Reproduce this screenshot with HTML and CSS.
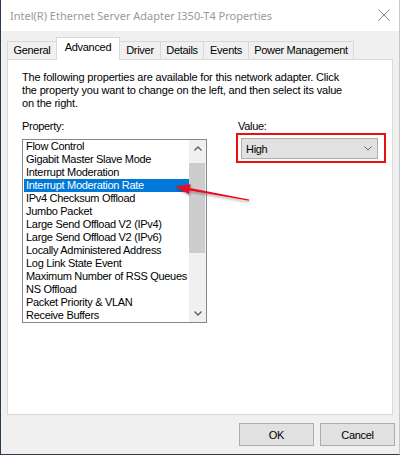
FILE: index.html
```html
<!DOCTYPE html>
<html lang="en">

<head>
    <meta charset="UTF-8">
    <title>Intel(R) Ethernet Server Adapter I350-T4 Properties</title>
    <link rel="stylesheet" href="styles.css">
</head>

<body>
    <div class="window">
        <div class="titlebar">
            <span class="title">Intel(R) Ethernet Server Adapter I350-T4 Properties</span>
            <svg class="close" width="12" height="12" viewBox="0 0 12 12">
                <path d="M0.5 0.5 L11.5 11.5 M11.5 0.5 L0.5 11.5" stroke="#8a8a8a" stroke-width="1" fill="none" />
            </svg>
        </div>

        <div class="client">
            <div class="tabs">
                <div class="tab tab-general">General</div>
                <div class="tab tab-advanced active">Advanced</div>
                <div class="tab tab-driver">Driver</div>
                <div class="tab tab-details">Details</div>
                <div class="tab tab-events">Events</div>
                <div class="tab tab-power">Power Management</div>
            </div>

            <div class="panel">
                <p class="intro">The following properties are available for this network adapter. Click<br>
                    the property you want to change on the left, and then select its value<br>
                    on the right.</p>

                <div class="fields">
                    <div class="field field-property">
                        <div class="label">Property:</div>
                        <div class="listbox">
                            <ul class="items">
                                <li>Flow Control</li>
                                <li>Gigabit Master Slave Mode</li>
                                <li>Interrupt Moderation</li>
                                <li class="selected">Interrupt Moderation Rate</li>
                                <li>IPv4 Checksum Offload</li>
                                <li>Jumbo Packet</li>
                                <li>Large Send Offload V2 (IPv4)</li>
                                <li>Large Send Offload V2 (IPv6)</li>
                                <li>Locally Administered Address</li>
                                <li>Log Link State Event</li>
                                <li>Maximum Number of RSS Queues</li>
                                <li>NS Offload</li>
                                <li>Packet Priority &amp; VLAN</li>
                                <li>Receive Buffers</li>
                            </ul>
                            <div class="scrollbar">
                                <div class="sb-button">
                                    <svg width="8" height="5" viewBox="0 0 8 5">
                                        <path d="M0.5 4.5 L4 1 L7.5 4.5" stroke="#606060" stroke-width="1.4" fill="none" />
                                    </svg>
                                </div>
                                <div class="sb-track">
                                    <div class="sb-thumb"></div>
                                </div>
                                <div class="sb-button">
                                    <svg width="8" height="5" viewBox="0 0 8 5">
                                        <path d="M0.5 0.5 L4 4 L7.5 0.5" stroke="#606060" stroke-width="1.4" fill="none" />
                                    </svg>
                                </div>
                            </div>
                        </div>
                    </div>

                    <div class="field field-value">
                        <div class="label">Value:</div>
                        <div class="callout">
                            <div class="combo">
                                <span>High</span>
                                <svg width="8" height="5" viewBox="0 0 8 5">
                                    <path d="M0.5 0.5 L4 4 L7.5 0.5" stroke="#606060" stroke-width="1" fill="none" />
                                </svg>
                            </div>
                        </div>
                    </div>
                </div>
            </div>

            <div class="buttons">
                <button class="btn">OK</button>
                <button class="btn">Cancel</button>
            </div>
        </div>

        <!-- red pointer drawn over the list -->
        <svg class="pointer" width="400" height="455" viewBox="0 0 400 455">
            <defs>
                <filter id="soft" x="-20%" y="-50%" width="140%" height="200%">
                    <feDropShadow dx="1" dy="2" stdDeviation="1" flood-color="#000" flood-opacity="0.3" />
                </filter>
            </defs>
            <polygon filter="url(#soft)" fill="#e81123"
                points="175,186.5 190.6,184.2 190,187.9 249.1,199.5 248.9,200.7 189.6,190.6 189,194.2" />
        </svg>
    </div>
</body>

</html>
```

FILE: styles.css
```css
* {
    box-sizing: border-box;
    margin: 0;
    padding: 0;
}

body {
    font-family: 'Liberation Sans', Arial, sans-serif;
    font-size: 11px;
    letter-spacing: -0.3px;
    color: #000;
    background-color: #fff;
}

.window {
    position: relative;
    width: 400px;
    height: 455px;
    border-left: 1px solid #2b3b4e;
    border-bottom: 1px solid #2b3b4e;
    border-right: 1px solid #c8c8c8;
    background-color: #f0f0f0;
    display: flex;
    flex-direction: column;
}

.titlebar {
    height: 31px;
    background-color: #fff;
    display: flex;
    align-items: center;
    justify-content: space-between;
    padding: 0 9px 0 9px;
}

.title {
    font-family: 'Noto Sans', sans-serif;
    font-size: 11px;
    letter-spacing: 0;
    color: #999;
    padding-bottom: 1px;
}

.close {
    display: block;
    margin-top: -1px;
}

.client {
    flex: 1;
    padding: 6px 6px 0 6px;
}

/* tab strip */
.tabs {
    display: flex;
    align-items: flex-end;
    height: 22px;
}

.tab {
    height: 18px;
    line-height: 17px;
    text-align: center;
    background-color: #f0f0f0;
    border: 1px solid #d9d9d9;
    border-bottom: none;
    margin-left: -1px;
}

.tab-general {
    margin-left: 0;
    width: 50px;
}

.tab-advanced {
    width: 64px;
}

.tab-driver {
    width: 42px;
}

.tab-details {
    width: 44px;
}

.tab-events {
    width: 46px;
}

.tab-power {
    width: 106px;
}

.tab.active {
    position: relative;
    z-index: 1;
    height: 23px;
    line-height: 19px;
    margin-bottom: -1px;
    background-color: #fff;
}

.panel {
    height: 356px;
    background-color: #fff;
    border: 1px solid #d9d9d9;
    padding: 11px 14px;
}

.intro {
    line-height: 13px;
    letter-spacing: -0.18px;
    white-space: nowrap;
}

.fields {
    display: flex;
    margin-top: 10px;
}

.label {
    line-height: 13px;
}

.field-property .label {
    margin-bottom: 6px;
}

/* list box */
.listbox {
    display: flex;
    width: 185px;
    height: 184px;
    border: 1px solid #828790;
}

.items {
    list-style: none;
    width: 166px;
}

.items li {
    height: 13px;
    line-height: 13px;
    padding-left: 3px;
    white-space: nowrap;
}

.items li.selected {
    margin-left: 1px;
    padding-left: 2px;
    background-color: #0078d7;
    color: #fff;
}

.scrollbar {
    width: 17px;
    display: flex;
    flex-direction: column;
    background-color: #f0f0f0;
}

.sb-button {
    height: 17px;
    display: flex;
    align-items: center;
    justify-content: center;
}

.sb-track {
    flex: 1;
    padding-top: 6px;
}

.sb-thumb {
    width: 16px;
    height: 90px;
    background-color: #cdcdcd;
}

/* value side */
.field-value {
    margin-left: 29px;
}

.field-value .label {
    padding-left: 2px;
}

.callout {
    width: 150px;
    border: 2px solid #e81010;
    padding: 3px 6px 2px 3px;
}

.combo {
    height: 21px;
    background-color: #e1e1e1;
    border: 1px solid #adadad;
    display: flex;
    align-items: center;
    justify-content: space-between;
    padding: 0 5px 0 4px;
}

.combo svg {
    display: block;
}

/* dialog buttons */
.buttons {
    display: flex;
    justify-content: flex-end;
    gap: 6px;
    padding-top: 8px;
    margin-right: -2px;
}

.btn {
    width: 75px;
    height: 23px;
    font-family: inherit;
    font-size: 11px;
    letter-spacing: -0.3px;
    color: #000;
    background-color: #e1e1e1;
    border: 1px solid #adadad;
}

.pointer {
    position: absolute;
    left: -1px;
    top: 0;
    pointer-events: none;
}
```
